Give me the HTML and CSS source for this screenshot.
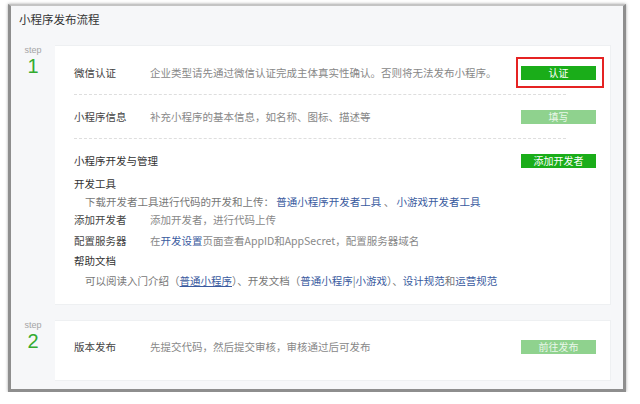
FILE: index.html
```html
<!DOCTYPE html>
<html lang="zh-CN">
<head>
<meta charset="utf-8">
<title>小程序发布流程</title>
<link rel="stylesheet" href="styles.css">
</head>
<body>
<div class="window">
  <div class="page-title">小程序发布流程</div>
  <div class="steps">
    <div class="step">
      <div class="step-mark"><span class="step-word">step</span><span class="step-num">1</span></div>
      <div class="card">
        <div class="row">
          <div class="label">微信认证</div>
          <div class="desc">企业类型请先通过微信认证完成主体真实性确认。否则将无法发布小程序。</div>
          <div class="btn-wrap"><span class="btn">认证</span><span class="highlight"></span></div>
        </div>
        <div class="sep"></div>
        <div class="row">
          <div class="label">小程序信息</div>
          <div class="desc">补充小程序的基本信息，如名称、图标、描述等</div>
          <div class="btn-wrap"><span class="btn light">填写</span></div>
        </div>
        <div class="sep"></div>
        <div class="group">
          <div class="group-head">
            <div class="group-title">小程序开发与管理</div>
            <div class="btn-wrap"><span class="btn">添加开发者</span></div>
          </div>
          <div class="item-title">开发工具</div>
          <div class="item-desc">下载开发者工具进行代码的开发和上传： <a class="link">普通小程序开发者工具</a> 、 <a class="link">小游戏开发者工具</a></div>
          <div class="item-inline"><span class="label">添加开发者</span><span class="desc">添加开发者，进行代码上传</span></div>
          <div class="item-inline gap"><span class="label">配置服务器</span><span class="desc">在<a class="link">开发设置</a>页面查看AppID和AppSecret，配置服务器域名</span></div>
          <div class="item-title tall">帮助文档</div>
          <div class="item-desc tall">可以阅读入门介绍（<a class="link under">普通小程序</a>）、开发文档（<a class="link">普通小程序</a>|<a class="link">小游戏</a>）、<a class="link">设计规范</a>和<a class="link">运营规范</a></div>
        </div>
      </div>
    </div>
    <div class="step">
      <div class="step-mark"><span class="step-word">step</span><span class="step-num">2</span></div>
      <div class="card">
        <div class="row single">
          <div class="label">版本发布</div>
          <div class="desc">先提交代码，然后提交审核，审核通过后可发布</div>
          <div class="btn-wrap"><span class="btn light">前往发布</span></div>
        </div>
      </div>
    </div>
  </div>
</div>
</body>
</html>
```

FILE: styles.css
```css
html, body {
  margin: 0;
  padding: 0;
  background: #ffffff;
}

body {
  font-family: "Noto Sans CJK SC", "Noto Sans", sans-serif;
  font-size: 10.5px;
  color: #444;
}

.window {
  margin: 4px 0 0 8px;
  width: 612px;
  height: 383px;
  background: #f6f7f9;
  border-left: 3px solid #8e8e8e;
  border-top: 2px solid #c4c4c4;
  border-right: 3px solid #8e8e8e;
  border-bottom: 3px solid #8e8e8e;
  box-shadow: 0 0 3px rgba(0, 0, 0, 0.35);
}

.page-title {
  height: 26px;
  line-height: 26px;
  padding-left: 8px;
  font-size: 11.5px;
  color: #333;
}

.steps {
  padding-top: 13px;
  display: flex;
  flex-direction: column;
  gap: 15px;
}

.step {
  display: flex;
}

.step-mark {
  width: 44px;
  display: flex;
  flex-direction: column;
  align-items: center;
}

.step-word {
  font-family: "Liberation Sans", "Noto Sans", sans-serif;
  font-size: 9px;
  line-height: 10px;
  margin-top: 0;
  color: #a5a5a5;
}

.step-num {
  font-family: "Liberation Sans", "Noto Sans", sans-serif;
  font-size: 20px;
  line-height: 22px;
  color: #34ab30;
}

.card {
  width: 522px;
  background: #fff;
  padding: 5px 14px 13px 19px;
  border: 1px solid #eef0f2;
  border-left: none;
}

.row {
  display: flex;
  align-items: center;
  padding: 11px 0;
  line-height: 21px;
}

.row.single {
  padding: 10px 0;
}

.label {
  width: 76px;
  flex: none;
  color: #444;
}

.desc {
  flex: 1;
  color: #888;
}

.btn-wrap {
  position: relative;
  width: 75px;
  flex: none;
  display: flex;
}

.btn {
  display: block;
  width: 75px;
  height: 14px;
  line-height: 14px;
  text-align: center;
  font-size: 10px;
  color: #fff;
  background: #1aad19;
}

.btn.light {
  background: #8fd28e;
  color: #e9f7e9;
}

.highlight {
  position: absolute;
  left: -5px;
  right: -8px;
  top: -9px;
  bottom: -8px;
  border: 2px solid #e52323;
}

.sep {
  border-top: 1px dashed #dedede;
  margin-right: 30px;
}

.group {
  padding-top: 12px;
}

.group-head {
  display: flex;
  align-items: center;
  justify-content: space-between;
  line-height: 20px;
  color: #333;
}

.item-title {
  margin-top: 4px;
  line-height: 18px;
  color: #333;
}

.item-desc {
  padding-left: 11px;
  line-height: 17px;
  color: #777;
}

.item-inline {
  display: flex;
  line-height: 20px;
}

.item-inline.gap {
  margin-top: 1px;
}

.item-title.tall {
  margin-top: 0;
  line-height: 20px;
}

.item-desc.tall {
  line-height: 20px;
}

.link {
  color: #3a5ba0;
  text-decoration: none;
}

.link.under {
  text-decoration: underline;
}
```
